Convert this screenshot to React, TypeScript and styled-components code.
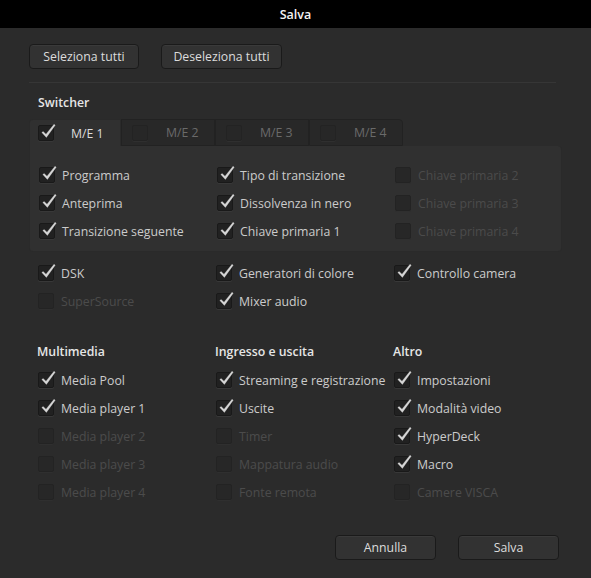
import React from 'react';
import styled, { createGlobalStyle } from 'styled-components';

const GlobalStyle = createGlobalStyle`
  html, body {
    margin: 0;
    padding: 0;
    background: #2b2b2b;
    font-family: "Open Sans", "Noto Sans", sans-serif;
  }
`;

const Window = styled.div`
  width: 591px;
  height: 578px;
  background: #2b2b2b;
  display: flex;
  flex-direction: column;
  overflow: hidden;
`;

const TitleBar = styled.div`
  height: 28px;
  background: #000;
  color: #f2f2f2;
  font-size: 12.5px;
  font-weight: 600;
  display: flex;
  align-items: center;
  justify-content: center;
`;

const Body = styled.div`
  padding: 16px 29px 0 29px;
  display: flex;
  flex-direction: column;
`;

const ButtonRow = styled.div`
  display: flex;
  gap: 22px;
  justify-content: ${p => (p.$end ? 'flex-end' : 'flex-start')};
  padding-right: ${p => (p.$end ? '3px' : '0')};
`;

const Button = styled.button`
  width: ${p => p.$w}px;
  height: 25px;
  background: #323232;
  border: 1px solid #1a1a1a;
  border-radius: 4px;
  box-shadow: inset 0 1px 0 #3a3a3a;
  color: #dcdcdc;
  font-family: inherit;
  font-size: 12.3px;
  padding: 0;
`;

const Divider = styled.div`
  height: 1px;
  background: #363636;
  margin: 13px 6px 0 0;
`;

const SectionTitle = styled.div`
  color: #e6e6e6;
  font-size: 12.3px;
  font-weight: 600;
  height: 18px;
  line-height: 18px;
  padding-left: ${p => p.$pad ?? 9}px;
`;

const Tabs = styled.div`
  display: flex;
  margin-top: 7px;
  height: 27px;
`;

const Tab = styled.div`
  width: ${p => p.$w}px;
  box-sizing: border-box;
  display: flex;
  align-items: center;
  padding-left: ${p => (p.$active ? 8 : 10)}px;
  background: ${p => (p.$active ? '#303030' : '#282828')};
  border: 1px solid ${p => (p.$active ? '#2a2a2a' : '#222')};
  border-bottom: ${p => (p.$active ? 'none' : '1px solid #222')};
  border-radius: ${p => (p.$first ? '4px 0 0 0' : p.$last ? '0 4px 0 0' : '0')};
  color: ${p => (p.$active ? '#dcdcdc' : '#6a6a6a')};
  font-size: 12.3px;
`;

const TabLabel = styled.span`
  margin-left: ${p => p.$gap}px;
`;

const Panel = styled.div`
  width: 533px;
  box-sizing: border-box;
  background: #303030;
  border: 1px solid #2a2a2a;
  border-top: none;
  border-radius: 0 4px 4px 4px;
  padding: 15px 0 6px 9px;
`;

const Grid = styled.div`
  display: grid;
  grid-template-columns: 178px 178px 178px;
  padding-left: ${p => p.$pad ?? 0}px;
`;

const Item = styled.div`
  height: 28px;
  display: flex;
  align-items: center;
  gap: 7px;
  font-size: 12.3px;
  white-space: nowrap;
  color: ${p => (p.$on ? '#cbcbcb' : '#4b4b4b')};
`;

const Box = styled.span`
  width: 16px;
  height: 16px;
  box-sizing: border-box;
  flex: none;
  position: relative;
  background: ${p => (p.$on ? '#212121' : '#272727')};
  border: 1px solid ${p => (p.$on ? '#191919' : '#232323')};
  border-radius: 2px;
  box-shadow: ${p => (p.$on ? '0 1px 0 #383838' : '0 1px 0 #2f2f2f')};
`;

const Tick = styled.svg`
  position: absolute;
  left: 1px;
  top: -3px;
`;

const Check = ({ on }: { on: boolean }) => (
  <Box $on={on}>
    {on && (
      <Tick width="17" height="17" viewBox="0 0 17 17">
        <path
          d="M1.8 9.6 L3.1 8.5 L6 11.2 L14 1.3 L15.2 2.2 L6.4 14.4 Z"
          fill="#d6d6d6"
          stroke="#d6d6d6"
          strokeWidth="0.3"
          strokeLinejoin="round"
        />
      </Tick>
    )}
  </Box>
);

type Entry = [string, boolean] | null;

const CheckGrid = ({ rows, pad }: { rows: Entry[][]; pad?: number }) => (
  <Grid $pad={pad}>
    {rows.flat().map((e, i) =>
      e ? (
        <Item key={i} $on={e[1]}>
          <Check on={e[1]} />
          {e[0]}
        </Item>
      ) : (
        <div key={i} />
      )
    )}
  </Grid>
);

const Spacer = styled.div`
  height: ${p => p.$h}px;
`;

const App = () => {
  const meRows: Entry[][] = [
    [['Programma', true], ['Tipo di transizione', true], ['Chiave primaria 2', false]],
    [['Anteprima', true], ['Dissolvenza in nero', true], ['Chiave primaria 3', false]],
    [['Transizione seguente', true], ['Chiave primaria 1', true], ['Chiave primaria 4', false]],
  ];
  const extraRows: Entry[][] = [
    [['DSK', true], ['Generatori di colore', true], ['Controllo camera', true]],
    [['SuperSource', false], ['Mixer audio', true], null],
  ];
  const bottomRows: Entry[][] = [
    [['Media Pool', true], ['Streaming e registrazione', true], ['Impostazioni', true]],
    [['Media player 1', true], ['Uscite', true], ['Modalità video', true]],
    [['Media player 2', false], ['Timer', false], ['HyperDeck', true]],
    [['Media player 3', false], ['Mappatura audio', false], ['Macro', true]],
    [['Media player 4', false], ['Fonte remota', false], ['Camere VISCA', false]],
  ];
  const tabs = ['M/E 1', 'M/E 2', 'M/E 3', 'M/E 4'];

  return (
    <Window>
      <GlobalStyle />
      <TitleBar>Salva</TitleBar>
      <Body>
        <ButtonRow>
          <Button $w={110}>Seleziona tutti</Button>
          <Button $w={121}>Deseleziona tutti</Button>
        </ButtonRow>
        <Divider />
        <Spacer $h={11} />
        <SectionTitle>Switcher</SectionTitle>
        <Tabs>
          {tabs.map((t, i) => (
            <Tab
              key={t}
              $w={i === 0 ? 92 : 94}
              $active={i === 0}
              $first={i === 0}
              $last={i === tabs.length - 1}
            >
              <Check on={i === 0} />
              <TabLabel $gap={i === 0 ? 17 : 18}>{t}</TabLabel>
            </Tab>
          ))}
        </Tabs>
        <Panel>
          <CheckGrid rows={meRows} />
        </Panel>
        <Spacer $h={7} />
        <CheckGrid rows={extraRows} pad={9} />
        <Spacer $h={28} />
        <Grid $pad={8}>
          <SectionTitle $pad={0}>Multimedia</SectionTitle>
          <SectionTitle $pad={0}>Ingresso e uscita</SectionTitle>
          <SectionTitle $pad={0}>Altro</SectionTitle>
        </Grid>
        <Spacer $h={5} />
        <CheckGrid rows={bottomRows} pad={9} />
        <Spacer $h={29} />
        <ButtonRow $end>
          <Button $w={101}>Annulla</Button>
          <Button $w={101}>Salva</Button>
        </ButtonRow>
      </Body>
    </Window>
  );
};

export default App;
